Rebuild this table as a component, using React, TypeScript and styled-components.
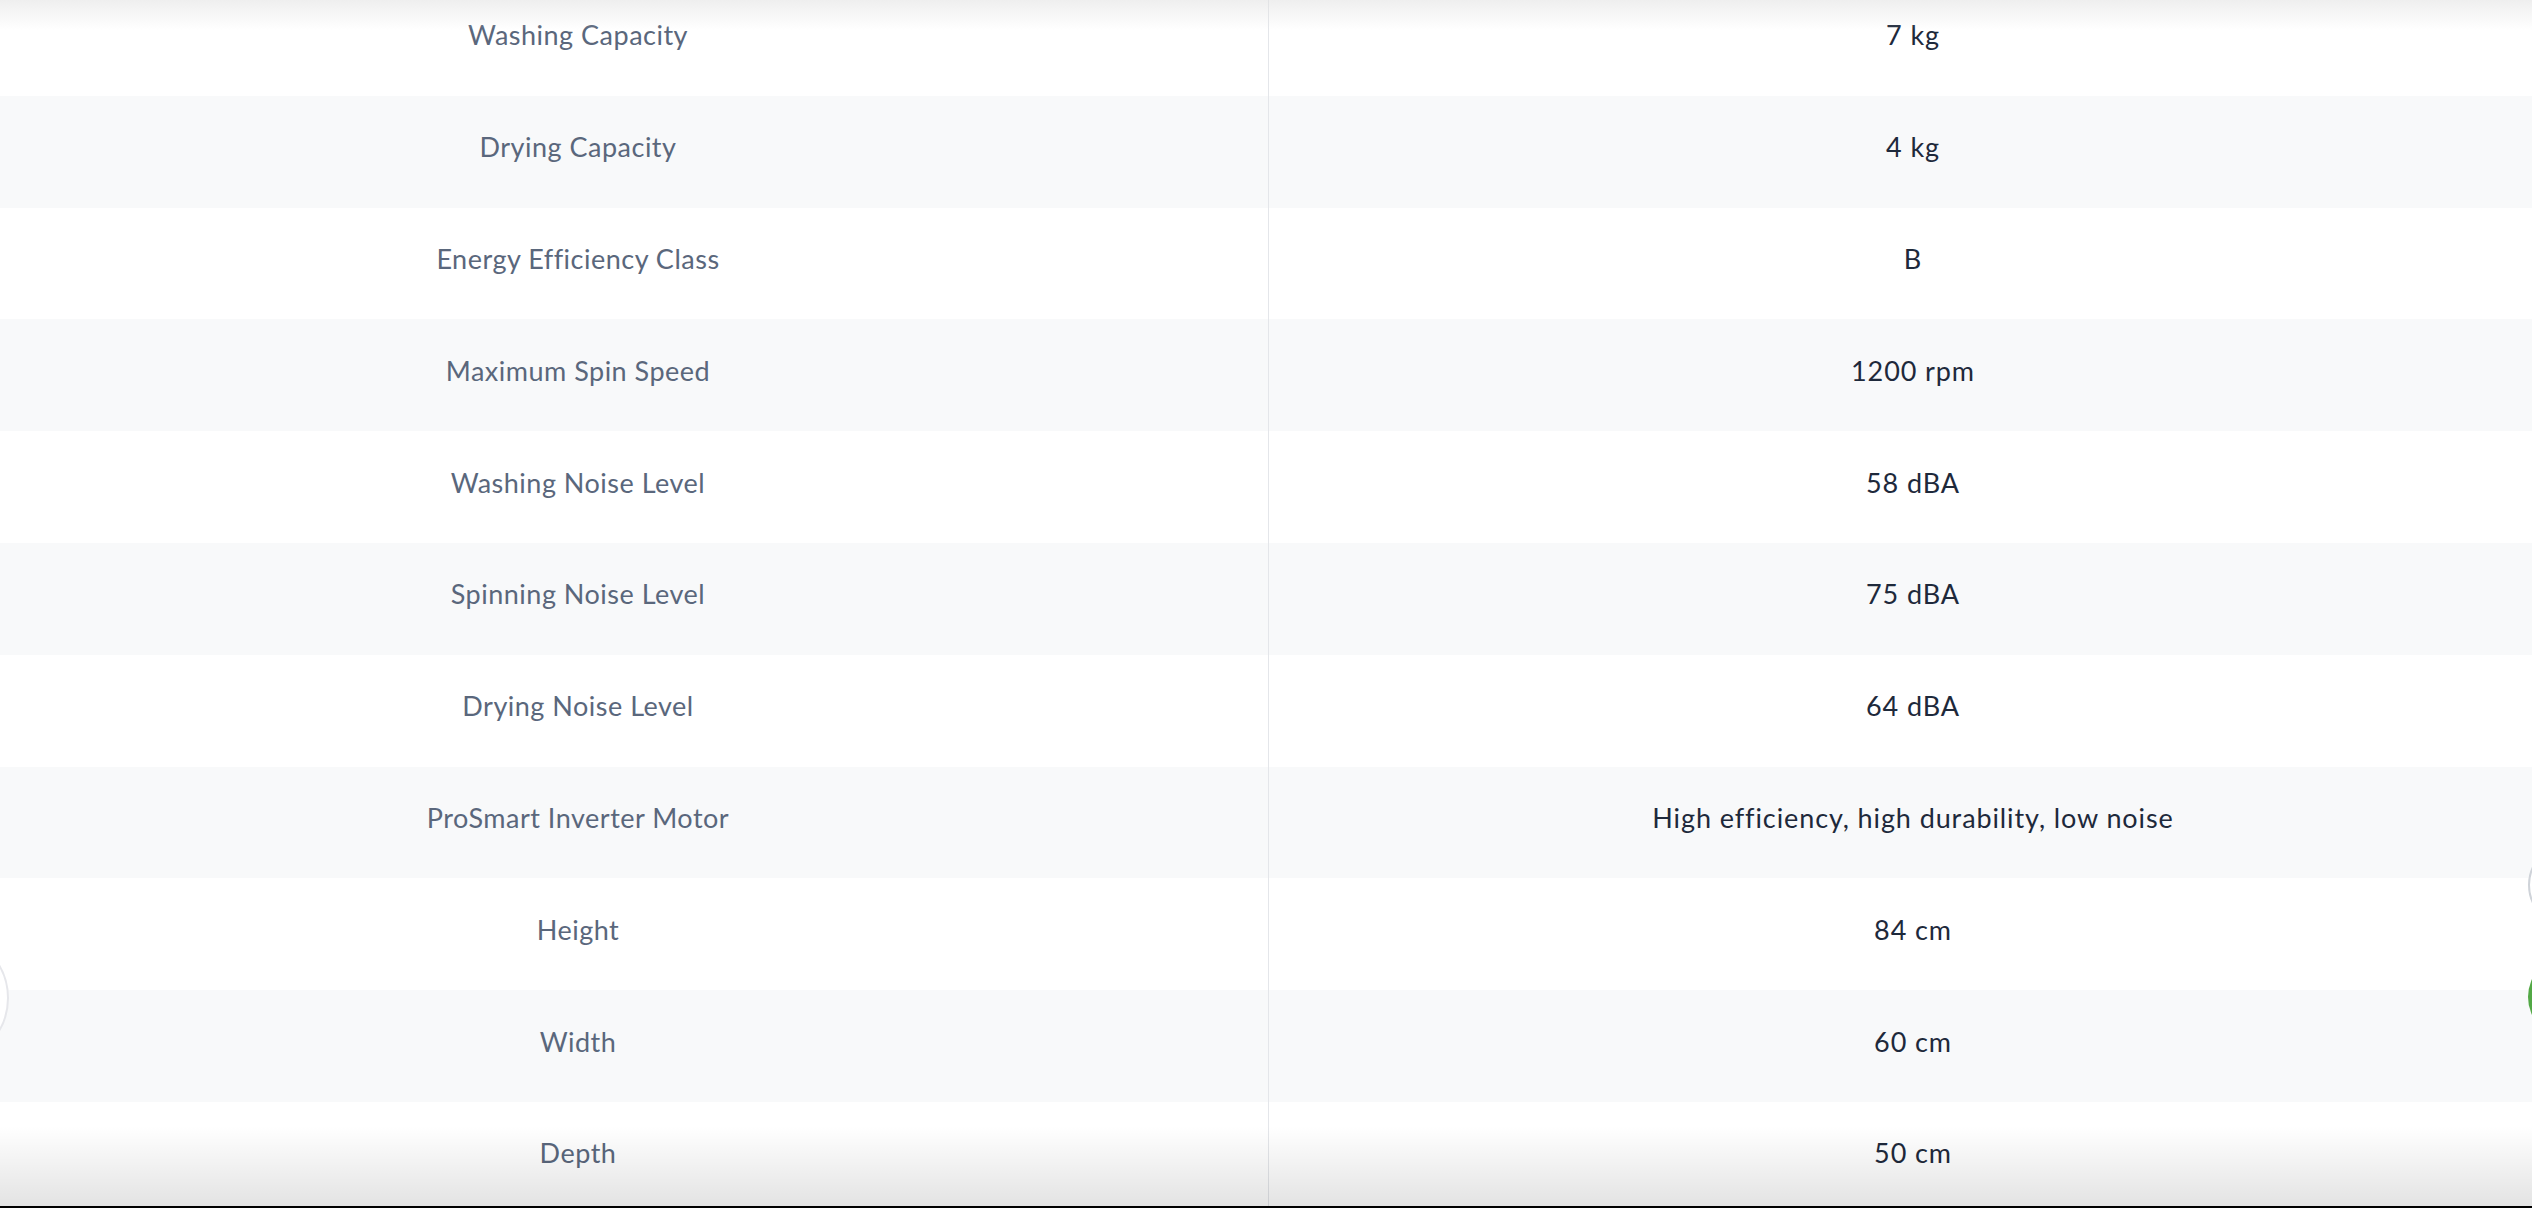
import React from "react";
import styled, { createGlobalStyle } from "styled-components";

const Global = createGlobalStyle`
  html, body { margin: 0; padding: 0; background: #ffffff; overflow: hidden; }
  * { box-sizing: border-box; }
`;

const Viewport = styled.div`
  position: relative;
  width: 2532px;
  height: 1208px;
  display: flex;
  flex-direction: column;
  overflow: hidden;
  background: #ffffff;
  font-family: Lato, "Noto Sans", sans-serif;
`;

const ScrollArea = styled.div`
  position: relative;
  flex: 1;
  overflow: hidden;
`;

const SpecTable = styled.div`
  display: grid;
  grid-template-columns: 1268px 1fr;
  margin-top: -16px;
`;

const Row = styled.div<{ $striped: boolean }>`
  display: contents;
  & > div {
    background: ${(p) => (p.$striped ? "#f8f9fa" : "#ffffff")};
  }
`;

const Cell = styled.div`
  height: 111.8px;
  display: flex;
  align-items: center;
  justify-content: center;
  padding-bottom: 10px;
  font-size: 27px;
  letter-spacing: 0.5px;
  white-space: nowrap;
`;

const LabelCell = styled(Cell)`
  padding-right: 112px;
  color: #5a677c;
`;

const ValueCell = styled(Cell)`
  padding-left: 25px;
  border-left: 1px solid #e4e6ea;
  color: #1e293b;
  letter-spacing: 0.9px;
`;

const TopFade = styled.div`
  position: absolute;
  top: 0;
  left: 0;
  right: 0;
  height: 30px;
  background: linear-gradient(to bottom, rgba(225, 225, 225, 0.55), rgba(255, 255, 255, 0));
  pointer-events: none;
`;

const BottomFade = styled.div`
  position: absolute;
  bottom: 0;
  left: 0;
  right: 0;
  height: 80px;
  background: linear-gradient(to bottom, rgba(0, 0, 0, 0), rgba(0, 0, 0, 0.11));
  pointer-events: none;
`;

const FrameEdge = styled.div`
  height: 2px;
  background: #000000;
`;

const NavButton = styled.div`
  position: absolute;
  left: -121px;
  top: 933px;
  width: 130px;
  height: 130px;
  border-radius: 50%;
  background: #ffffff;
  border: 2px solid #e6e7eb;
`;

const FloatStack = styled.div`
  position: absolute;
  right: -80px;
  top: 843px;
  display: flex;
  flex-direction: column;
  gap: 28px;
`;

const FloatButton = styled.div<{ $green?: boolean }>`
  width: 84px;
  height: 84px;
  border-radius: 50%;
  background: ${(p) => (p.$green ? "#52a845" : "#ffffff")};
  border: ${(p) => (p.$green ? "none" : "2px solid #cfd3d9")};
`;

const specs: [string, string][] = [
  ["Washing Capacity", "7 kg"],
  ["Drying Capacity", "4 kg"],
  ["Energy Efficiency Class", "B"],
  ["Maximum Spin Speed", "1200 rpm"],
  ["Washing Noise Level", "58 dBA"],
  ["Spinning Noise Level", "75 dBA"],
  ["Drying Noise Level", "64 dBA"],
  ["ProSmart Inverter Motor", "High efficiency, high durability, low noise"],
  ["Height", "84 cm"],
  ["Width", "60 cm"],
  ["Depth", "50 cm"],
];

export default function App() {
  return (
    <>
      <Global />
      <Viewport>
        <ScrollArea>
          <SpecTable>
            {specs.map(([label, value], i) => (
              <Row key={label} $striped={i % 2 === 1}>
                <LabelCell>{label}</LabelCell>
                <ValueCell>{value}</ValueCell>
              </Row>
            ))}
          </SpecTable>
          <TopFade />
          <BottomFade />
          <NavButton />
          <FloatStack>
            <FloatButton />
            <FloatButton $green />
          </FloatStack>
        </ScrollArea>
        <FrameEdge />
      </Viewport>
    </>
  );
}
